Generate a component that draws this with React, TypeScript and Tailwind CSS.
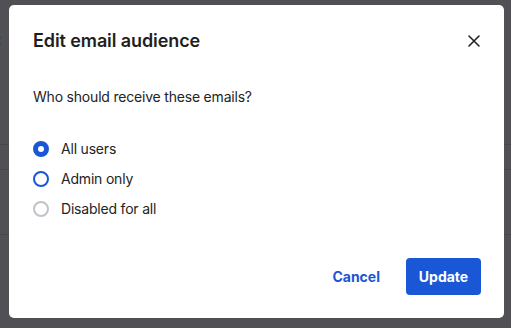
import React from "react";

function Radio({ state }: { state: "checked" | "blue" | "gray" }) {
  if (state === "checked")
    return <span className="block w-4 h-4 rounded-full border-[5px] border-[#1a57d6] bg-white shrink-0" />;
  if (state === "blue")
    return <span className="block w-4 h-4 rounded-full border-2 border-[#1a57d6] bg-white shrink-0" />;
  return <span className="block w-4 h-4 rounded-full border-2 border-[#c2c2c8] bg-white shrink-0" />;
}

export default function App() {
  const options: { label: string; state: "checked" | "blue" | "gray" }[] = [
    { label: "All users", state: "checked" },
    { label: "Admin only", state: "blue" },
    { label: "Disabled for all", state: "gray" },
  ];
  return (
    <div
      className="relative w-[511px] h-[328px] overflow-hidden bg-[#515155]"
      style={{ fontFamily: "Inter, 'Noto Sans', sans-serif" }}
    >
      {/* dimmed page behind the dialog */}
      <div className="flex flex-col">
        <div className="h-[32px]" />
        <div className="h-[16px] text-[14px] leading-[16px] font-semibold text-[#1d3a8a] -ml-[4px]">t</div>
        <div className="h-[96px]" />
        <div className="h-px bg-[#47474b]" />
        <div className="h-[24px]" />
        <div className="h-px bg-[#47474b]" />
        <div className="h-[64px]" />
        <div className="h-px bg-[#47474b]" />
      </div>

      <div className="absolute left-[9px] top-[5px] w-[495px] h-[313px] bg-white rounded-[5px] flex flex-col">
        <div className="flex items-center justify-between pl-6 pr-6 pt-6 h-[48px]">
          <h2 className="text-[18px] leading-6 font-semibold tracking-[-0.1px] text-[#1e1e20]">Edit email audience</h2>
          <svg width="12" height="12" viewBox="0 0 12 12" className="text-[#222]">
            <path d="M1 1 L11 11 M11 1 L1 11" stroke="currentColor" strokeWidth="1.6" strokeLinecap="round" />
          </svg>
        </div>
        <p className="mt-[34px] px-6 text-[14px] leading-5 tracking-[-0.2px] text-[#232326]">
          Who should receive these emails?
        </p>
        <div className="mt-[32px] px-6 flex flex-col gap-[10px]">
          {options.map((o) => (
            <label key={o.label} className="flex items-center gap-3 h-5">
              <Radio state={o.state} />
              <span className="text-[14px] leading-5 tracking-[-0.2px] text-[#232326]">{o.label}</span>
            </label>
          ))}
        </div>
        <div className="mt-auto flex items-center justify-end gap-[26px] pr-[23px] pb-[23px]">
          <button className="text-[14px] font-bold text-[#1a57d6]">Cancel</button>
          <button className="h-[37px] w-[75px] rounded-[4px] bg-[#1a57d6] text-white text-[14px] font-bold">
            Update
          </button>
        </div>
      </div>
    </div>
  );
}
